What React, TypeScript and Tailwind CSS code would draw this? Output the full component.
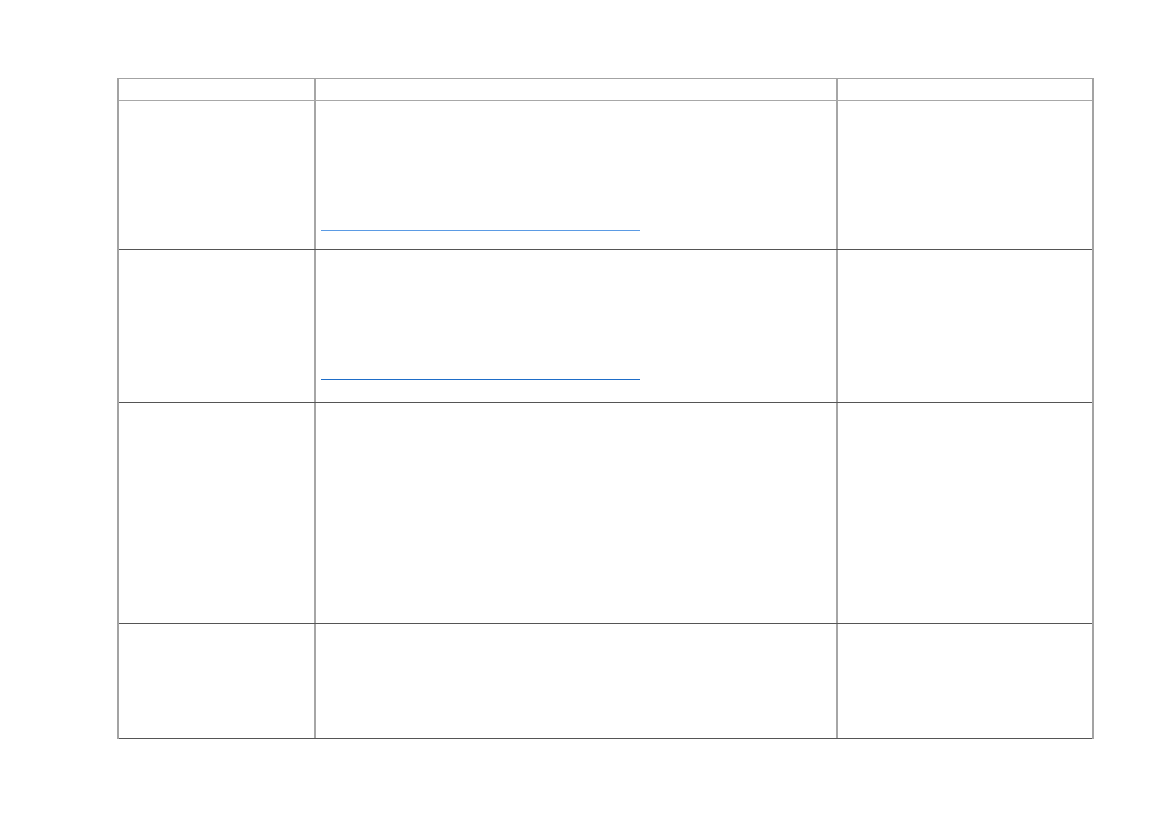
const rows = [
  { h: 'h-[149px]', link: 'border-[#5b9be4]' },
  { h: 'h-[153px]', link: 'border-[#1e6dc8]' },
  { h: 'h-[221px]', link: '' },
  { h: 'h-[115px]', link: '' },
];

export default function App() {
  return (
    <div className="min-h-[827px] w-full bg-white pt-[78px] pl-[117px] font-['Liberation_Sans',sans-serif]">
      <div className="w-[977px] border-x-2 border-t border-[#a3a3a3]">
        {/* Header row */}
        <div className="grid h-[22px] grid-cols-[197px_522px_1fr] border-b border-[#a8a8a8]">
          <div className="border-r-2 border-[#a6a6a6]" />
          <div className="border-r-2 border-[#a6a6a6]" />
          <div />
        </div>

        {rows.map((r, i) => (
          <div key={i} className={`grid ${r.h} grid-cols-[197px_522px_1fr] overflow-hidden border-b border-[#555555]`}>
            <div className="border-r-2 border-[#a6a6a6]" />
            <div className="border-r-2 border-[#a6a6a6]">
              {r.link && (
                <a href="#" className={`ml-[5px] mt-[128px] block h-[2px] w-[319px] border-b-[1.5px] ${r.link}`}>
                  {''}
                </a>
              )}
            </div>
            <div />
          </div>
        ))}
      </div>
    </div>
  );
}
